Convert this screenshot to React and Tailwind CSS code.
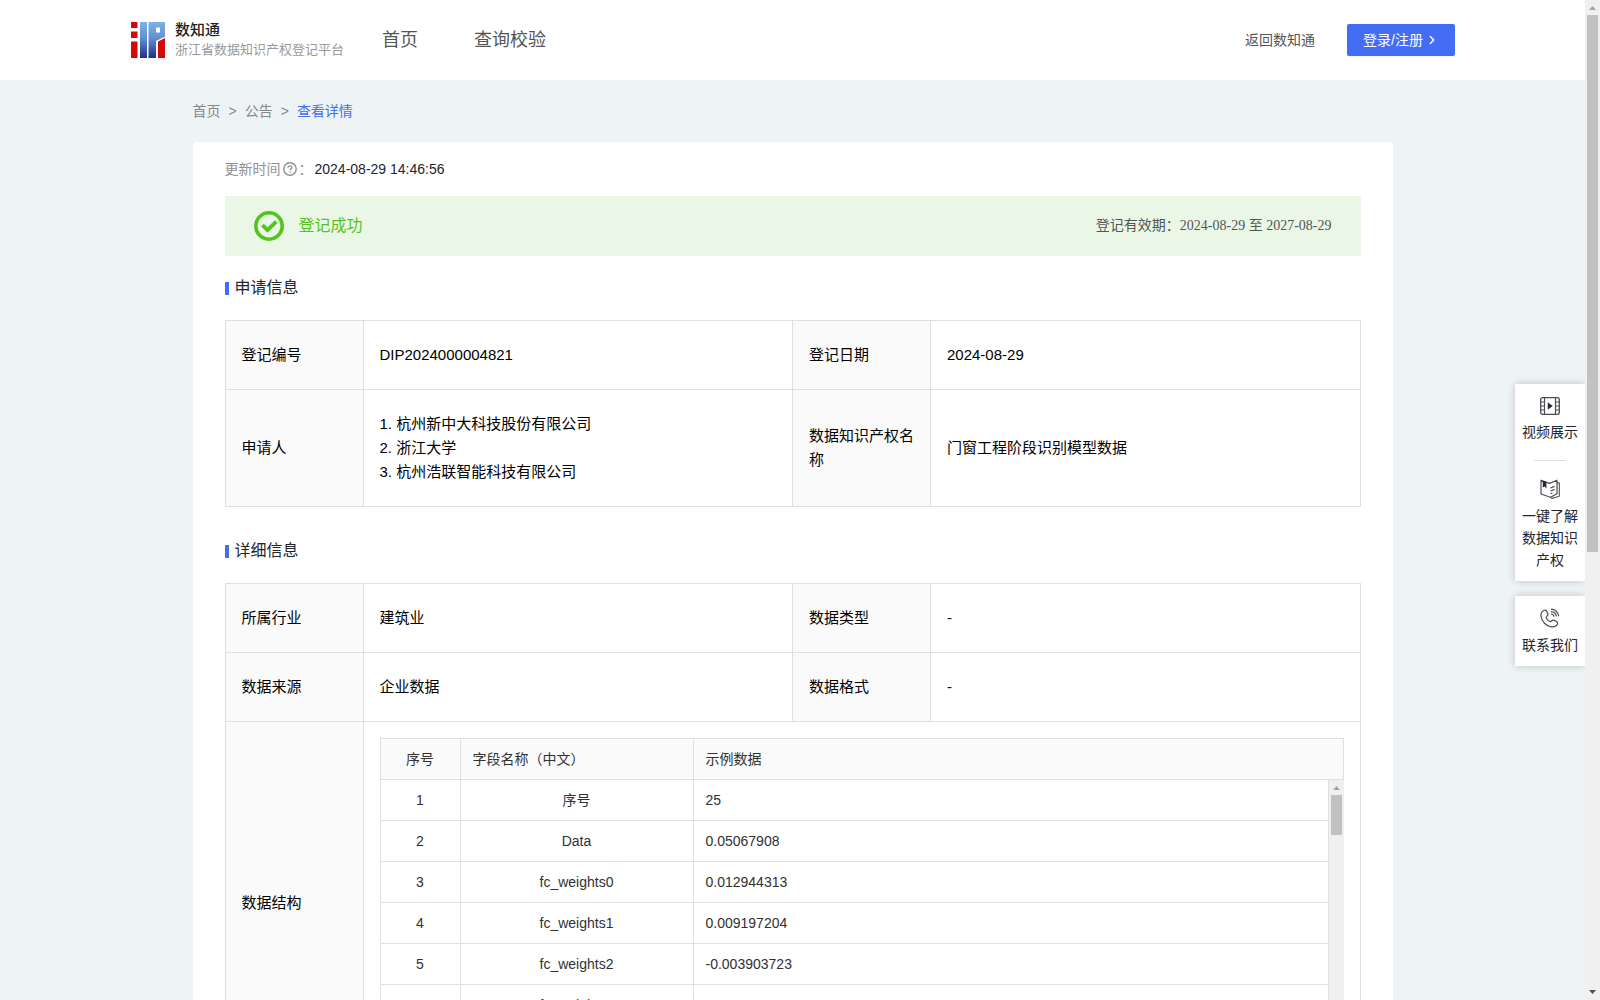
import React from "react";
import { ChevronRight } from "lucide-react";

const applicants = ["杭州新中大科技股份有限公司", "浙江大学", "杭州浩联智能科技有限公司"];

const fields = [
  { name: "序号", sample: "25" },
  { name: "Data", sample: "0.05067908" },
  { name: "fc_weights0", sample: "0.012944313" },
  { name: "fc_weights1", sample: "0.009197204" },
  { name: "fc_weights2", sample: "-0.003903723" },
  { name: "fc_weights3", sample: "-0.005400520" },
  { name: "fc_weights4", sample: "0.007215634" },
];

function Logo() {
  return (
    <svg width="34" height="36" viewBox="0 0 34 36" aria-hidden="true">
      <defs>
        <linearGradient id="logoBlue" gradientUnits="userSpaceOnUse" x1="0" y1="0" x2="0" y2="36">
          <stop offset="0" stopColor="#7fb2e6" />
          <stop offset="0.45" stopColor="#5f8fd0" />
          <stop offset="1" stopColor="#1f3280" />
        </linearGradient>
      </defs>
      <rect x="0" y="0" width="6.5" height="6" fill="#d30b0b" />
      <rect x="0" y="9.5" width="6.5" height="6.5" fill="#d30b0b" />
      <rect x="0" y="19.5" width="6.5" height="16.5" fill="#d30b0b" />
      <path d="M9 0H16V36H9Z" fill="url(#logoBlue)" />
      <path d="M17.500 0H34V14.500L25 19V36H17.500Z M25 5.500V10.500H29V5.500Z" fillRule="evenodd" fill="url(#logoBlue)" />
      <path d="M27 19.500L34 16V36H27Z" fill="#d30b0b" />
    </svg>
  );
}

function HelpIcon() {
  return (
    <svg width="14" height="14" viewBox="0 0 14 14" fill="none" stroke="#8f8f94" aria-hidden="true">
      <circle cx="7" cy="7" r="6.2" strokeWidth="1.4" />
      <path d="M5.1 5.7c0-2.4 3.8-2.3 3.8 0 0 1.2-1.8 1.2-1.8 2.6" strokeWidth="1.3" />
      <path d="M7.1 9.4v1.3" strokeWidth="1.4" />
    </svg>
  );
}

function SuccessIcon() {
  return (
    <svg width="30" height="30" viewBox="0 0 30 30" fill="none" stroke="#52c41a" aria-hidden="true">
      <circle cx="15" cy="15" r="13.2" strokeWidth="3.6" />
      <path d="M8.500 14.200l5 5 8.700-8.500" strokeWidth="3.8" />
    </svg>
  );
}

function VideoIcon() {
  return (
    <svg width="20" height="18" viewBox="0 0 20 18" fill="none" stroke="#4a4b54" aria-hidden="true">
      <rect x="0.7" y="0.7" width="18.6" height="16.6" rx="2" strokeWidth="1.3" />
      <path d="M4.5 1v16M15.5 1v16M1 5h3.5M1 9h3.5M1 13h3.5M15.5 5H19M15.5 9H19M15.5 13H19" strokeWidth="1.2" />
      <path d="M8 5.800l4.400 3.200L8 12.200z" fill="#23242e" stroke="#23242e" strokeWidth="0.5" />
    </svg>
  );
}

function BookIcon() {
  return (
    <svg width="20" height="20" viewBox="0 0 20 20" fill="none" stroke="#4a4b54" aria-hidden="true">
      <path d="M1 1.2l8.5 3.2L17 1.2v13.6l-6.5 3.4L1 15z" strokeWidth="1.2" strokeLinejoin="round" />
      <path d="M17 3.6l2.3.6v13l-7.2 2.2-1.8-.8" strokeWidth="1.1" />
      <path d="M10.5 9l4-1.6M10.5 12l4-1.6M10.5 14.8l2-.8" strokeWidth="1.2" />
      <path d="M2.800 1.800l3.600 1.200v6.500L4.600 7.500 2.800 8.600z" fill="#23242e" stroke="none" />
    </svg>
  );
}

function PhoneIcon() {
  return (
    <svg width="20" height="20" viewBox="0 0 20 20" fill="none" stroke="#4a4b54" strokeWidth="1.2" aria-hidden="true">
      <path
        d="M4.2 2.2C2 3.2.6 5.4 1 8.2c.8 5.4 5 9.8 10.200 10.600 3 .4 5.200-.8 6.200-2.600.5-1-.1-2-1-2.600l-2.200-1.300c-1-.5-1.900-.2-2.500.6-.7.900-1.500.9-2.400.4-1.300-.8-2.300-2-2.900-3.300-.4-1-.1-1.500.7-2.100.8-.7 1-1.500.600-2.400l-1.100-2.400C6 2.100 5.200 1.800 4.200 2.200z"
        strokeLinejoin="round"
      />
      <path d="M11 1.200c4 0 7.300 3 7.800 7M11 3.600c2.900.1 5 2.100 5.400 4.800M11 6c1.600.1 2.700 1.100 3 2.600" />
    </svg>
  );
}

function SectionTitle({ children }) {
  return (
    <h2 className="flex h-6 items-center gap-1.5 text-base text-[#23242e]">
      <span className="h-[13px] w-1 bg-[#446df6]" />
      {children}
    </h2>
  );
}

function Row({ items, height }) {
  return (
    <tr className={height}>
      {items.map((item) => (
        <React.Fragment key={item.label}>
          <th scope="row" className="border border-[#e0e0e0] bg-[#fafafa] px-4 text-left font-normal">
            {item.label}
          </th>
          <td className="border border-[#e0e0e0] px-4">{item.value}</td>
        </React.Fragment>
      ))}
    </tr>
  );
}

function InfoTable({ children }) {
  return (
    <table className="w-full table-fixed border-collapse text-[15px] leading-6 text-black">
      <colgroup>
        <col className="w-[138px]" />
        <col />
        <col className="w-[138px]" />
        <col />
      </colgroup>
      <tbody>{children}</tbody>
    </table>
  );
}

function ScrollArrow({ down }) {
  return (
    <svg width="15" height="15" viewBox="0 0 15 15" className="shrink-0" aria-hidden="true">
      {down ? <path d="M4 5h7L7.500 9z" fill="#505050" /> : <path d="M4 10h7L7.500 6z" fill="#a3a3a3" />}
    </svg>
  );
}

function FieldTable() {
  return (
    <div className="text-sm text-[#303133]">
      <table className="w-full table-fixed border-collapse">
        <colgroup>
          <col className="w-20" />
          <col className="w-[233px]" />
          <col />
        </colgroup>
        <thead>
          <tr className="h-[41px] bg-[#fafafa]">
            <th scope="col" className="border border-[#e0e0e0] font-normal">序号</th>
            <th scope="col" className="border border-[#e0e0e0] px-3 text-left font-normal">字段名称（中文）</th>
            <th scope="col" className="border border-[#e0e0e0] px-3 text-left font-normal">示例数据</th>
          </tr>
        </thead>
      </table>
      <div className="flex h-[288px] overflow-hidden">
        <table className="-mt-px flex-1 table-fixed border-collapse self-start">
          <colgroup>
            <col className="w-20" />
            <col className="w-[233px]" />
            <col />
          </colgroup>
          <tbody>
            {fields.map((field, i) => (
              <tr key={field.name} className="h-[41px]">
                <td className="border border-[#e0e0e0] text-center">{i + 1}</td>
                <td className="border border-[#e0e0e0] px-3 text-center">{field.name}</td>
                <td className="border border-[#e0e0e0] px-3">{field.sample}</td>
              </tr>
            ))}
          </tbody>
        </table>
        <div className="flex w-[15px] flex-col items-center bg-[#f0f0f0]">
          <ScrollArrow />
          <div className="h-10 w-[11px] bg-[#c1c1c1]" />
        </div>
      </div>
    </div>
  );
}

function SideItem({ icon, children }) {
  return (
    <button className="flex w-full flex-col items-center gap-1.5 px-1.5 text-sm leading-[22px] text-[#23242e]">
      {icon}
      {children}
    </button>
  );
}

function App() {
  return (
    <div className="flex h-screen overflow-hidden bg-[#eef3f6] font-['Liberation_Sans','Noto_Sans_CJK_SC',sans-serif] text-sm">
      <div className="relative min-w-0 flex-1 overflow-hidden">
        <header className="flex h-20 items-center bg-white px-[130px] text-[#555]">
          <a href="#" className="flex items-center gap-2.5 pl-px">
            <Logo />
            <span className="flex flex-col">
              <strong className="text-[15px] leading-5 font-medium text-[#222]">数知通</strong>
              <span className="text-[13px] leading-5 text-[#999]">浙江省数据知识产权登记平台</span>
            </span>
          </a>
          <nav className="ml-[38px] flex gap-14 text-lg">
            <a href="#">首页</a>
            <a href="#">查询校验</a>
          </nav>
          <a href="#" className="ml-auto">返回数知通</a>
          <button className="ml-8 flex h-8 w-[108px] items-center gap-0.5 rounded-xs bg-[#446df6] pl-4 text-white shadow-xs">
            登录/注册
            <ChevronRight size={14} strokeWidth={2.5} />
          </button>
        </header>

        <main className="mx-auto w-[1200px] max-w-full">
          <nav className="flex h-[62px] items-center gap-2 text-[#888]">
            <a href="#">首页</a>
            <span>&gt;</span>
            <a href="#">公告</a>
            <span>&gt;</span>
            <a href="#" className="text-[#446df6]">查看详情</a>
          </nav>

          <section className="rounded-sm bg-white px-8 pb-8">
            <div className="flex h-[54px] items-center text-[#909094]">
              更新时间
              <span className="mx-0.5">
                <HelpIcon />
              </span>
              ：
              <span className="ml-0.5 text-[#23242e]">2024-08-29 14:46:56</span>
            </div>

            <div className="flex h-[60px] items-center bg-[#ebf7e6] px-[29px]">
              <SuccessIcon />
              <span className="ml-[15px] text-base text-[#52c41a]">登记成功</span>
              <span className="ml-auto font-['Liberation_Serif','Noto_Sans_CJK_SC',serif] text-[#555]">
                登记有效期：2024-08-29 至 2027-08-29
              </span>
            </div>

            <div className="pt-5 pb-5">
              <SectionTitle>申请信息</SectionTitle>
            </div>
            <InfoTable>
              <Row
                height="h-[69px]"
                items={[
                  { label: "登记编号", value: "DIP2024000004821" },
                  { label: "登记日期", value: "2024-08-29" },
                ]}
              />
              <Row
                height="h-[117px]"
                items={[
                  {
                    label: "申请人",
                    value: applicants.map((name, i) => (
                      <p key={name}>
                        {i + 1}. {name}
                      </p>
                    )),
                  },
                  { label: "数据知识产权名称", value: "门窗工程阶段识别模型数据" },
                ]}
              />
            </InfoTable>

            <div className="pt-8 pb-5">
              <SectionTitle>详细信息</SectionTitle>
            </div>
            <InfoTable>
              <Row
                height="h-[69px]"
                items={[
                  { label: "所属行业", value: "建筑业" },
                  { label: "数据类型", value: "-" },
                ]}
              />
              <Row
                height="h-[69px]"
                items={[
                  { label: "数据来源", value: "企业数据" },
                  { label: "数据格式", value: "-" },
                ]}
              />
              <tr>
                <th scope="row" className="border border-[#e0e0e0] bg-[#fafafa] px-4 text-left font-normal">
                  数据结构
                </th>
                <td colSpan={3} className="border border-[#e0e0e0] p-4">
                  <FieldTable />
                </td>
              </tr>
            </InfoTable>
          </section>
        </main>

        {/* Floating shortcuts */}
        <aside className="absolute top-96 right-0 flex w-[70px] flex-col gap-[15px]">
          <div className="flex flex-col items-center bg-white pt-[13px] pb-2.5 shadow-[0_0_8px_rgba(0,0,0,0.2)]">
            <SideItem icon={<VideoIcon />}>视频展示</SideItem>
            <div className="mt-[17px] mb-[18px] h-px w-8 bg-[#e0e0e0]" />
            <SideItem icon={<BookIcon />}>一键了解数据知识产权</SideItem>
          </div>
          <div className="bg-white pt-3 pb-2.5 shadow-[0_0_8px_rgba(0,0,0,0.2)]">
            <SideItem icon={<PhoneIcon />}>联系我们</SideItem>
          </div>
        </aside>
      </div>

      {/* Page scrollbar */}
      <div className="flex w-[15px] flex-col items-center bg-[#f0f0f0]">
        <ScrollArrow />
        <div className="h-[537px] w-[11px] bg-[#c1c1c1]" />
        <div className="mt-auto flex">
          <ScrollArrow down />
        </div>
      </div>
    </div>
  );
}

export default App;
